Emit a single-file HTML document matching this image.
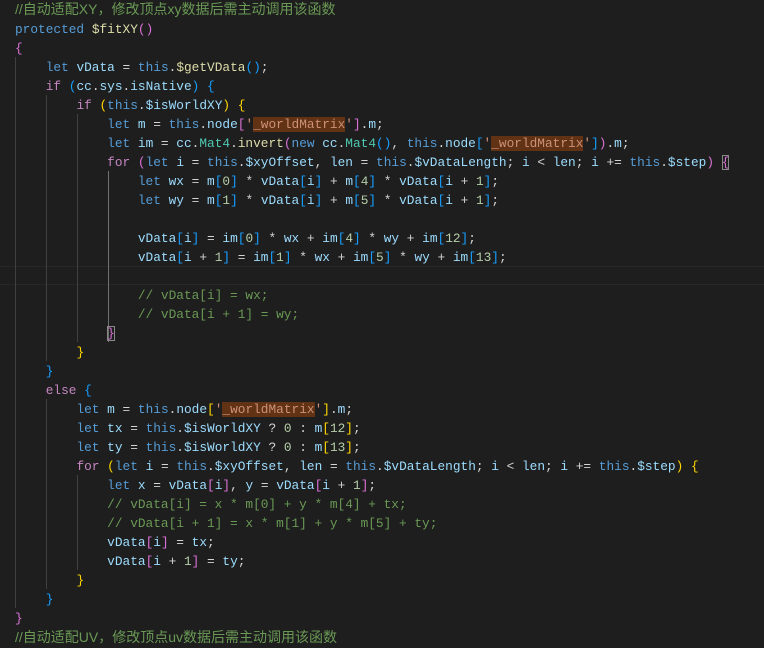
<!DOCTYPE html>
<html><head><meta charset="utf-8"><style>
html,body{margin:0;padding:0;background:#1e1e1e;width:764px;height:630px;overflow:hidden}
pre{margin:0;position:absolute;left:15px;top:0;font-family:"Liberation Mono",monospace;font-size:12.8px;line-height:19px;color:#d4d4d4;white-space:pre}
.k{color:#569cd6}.c{color:#c586c0}.v{color:#9cdcfe}.f{color:#dcdcaa}.cm{color:#6a9955}.n{color:#b5cea8}.s{color:#ce9178}.t{color:#4ec9b0}
.g{color:#ffd700}.o{color:#da70d6}.b{color:#179fff}
.h{background:#613214}
.cj{font-family:"Liberation Sans","Noto Sans CJK SC",sans-serif;font-size:14px}
.box{outline:1px solid #888;outline-offset:-1px}
.guide{position:absolute;width:1px;background:#404040}
.hl{position:absolute;left:0;width:764px;top:266px;height:17px;border-top:1px solid #282828;border-bottom:1px solid #282828}
</style></head><body>
<div class="hl"></div>
<div class="guide" style="left:15px;top:57px;height:551px"></div>
<div class="guide" style="left:46px;top:95px;height:266px"></div>
<div class="guide" style="left:77px;top:114px;height:228px"></div>
<div class="guide" style="left:108px;top:171px;height:171px;background:#707070"></div>
<div class="guide" style="left:46px;top:399px;height:190px"></div>
<div class="guide" style="left:77px;top:475px;height:95px"></div>
<pre><span class="cm cj">//自动适配XY，修改顶点xy数据后需主动调用该函数</span>
<span class="k">protected</span> <span class="f">$fitXY</span><span class="o">()</span>
<span class="o">{</span>
    <span class="k">let</span> <span class="v">vData</span> = <span class="k">this</span>.<span class="f">$getVData</span><span class="b">()</span>;
    <span class="c">if</span> <span class="b">(</span><span class="v">cc</span>.<span class="v">sys</span>.<span class="v">isNative</span><span class="b">)</span> <span class="b">{</span>
        <span class="c">if</span> <span class="g">(</span><span class="k">this</span>.<span class="v">$isWorldXY</span><span class="g">)</span> <span class="g">{</span>
            <span class="k">let</span> <span class="v">m</span> = <span class="k">this</span>.<span class="v">node</span><span class="o">[</span><span class="s">'<span class="h">_worldMatrix</span>'</span><span class="o">]</span>.<span class="v">m</span>;
            <span class="k">let</span> <span class="v">im</span> = <span class="v">cc</span>.<span class="t">Mat4</span>.<span class="f">invert</span><span class="o">(</span><span class="k">new</span> <span class="v">cc</span>.<span class="t">Mat4</span><span class="b">()</span>, <span class="k">this</span>.<span class="v">node</span><span class="b">[</span><span class="s">'<span class="h">_worldMatrix</span>'</span><span class="b">]</span><span class="o">)</span>.<span class="v">m</span>;
            <span class="c">for</span> <span class="o">(</span><span class="k">let</span> <span class="v">i</span> = <span class="k">this</span>.<span class="v">$xyOffset</span>, <span class="v">len</span> = <span class="k">this</span>.<span class="v">$vDataLength</span>; <span class="v">i</span> &lt; <span class="v">len</span>; <span class="v">i</span> += <span class="k">this</span>.<span class="v">$step</span><span class="o">)</span> <span class="o box">{</span>
                <span class="k">let</span> <span class="v">wx</span> = <span class="v">m</span><span class="b">[</span><span class="n">0</span><span class="b">]</span> * <span class="v">vData</span><span class="b">[</span><span class="v">i</span><span class="b">]</span> + <span class="v">m</span><span class="b">[</span><span class="n">4</span><span class="b">]</span> * <span class="v">vData</span><span class="b">[</span><span class="v">i</span> + <span class="n">1</span><span class="b">]</span>;
                <span class="k">let</span> <span class="v">wy</span> = <span class="v">m</span><span class="b">[</span><span class="n">1</span><span class="b">]</span> * <span class="v">vData</span><span class="b">[</span><span class="v">i</span><span class="b">]</span> + <span class="v">m</span><span class="b">[</span><span class="n">5</span><span class="b">]</span> * <span class="v">vData</span><span class="b">[</span><span class="v">i</span> + <span class="n">1</span><span class="b">]</span>;

                <span class="v">vData</span><span class="b">[</span><span class="v">i</span><span class="b">]</span> = <span class="v">im</span><span class="b">[</span><span class="n">0</span><span class="b">]</span> * <span class="v">wx</span> + <span class="v">im</span><span class="b">[</span><span class="n">4</span><span class="b">]</span> * <span class="v">wy</span> + <span class="v">im</span><span class="b">[</span><span class="n">12</span><span class="b">]</span>;
                <span class="v">vData</span><span class="b">[</span><span class="v">i</span> + <span class="n">1</span><span class="b">]</span> = <span class="v">im</span><span class="b">[</span><span class="n">1</span><span class="b">]</span> * <span class="v">wx</span> + <span class="v">im</span><span class="b">[</span><span class="n">5</span><span class="b">]</span> * <span class="v">wy</span> + <span class="v">im</span><span class="b">[</span><span class="n">13</span><span class="b">]</span>;

                <span class="cm">// vData[i] = wx;</span>
                <span class="cm">// vData[i + 1] = wy;</span>
            <span class="o box">}</span>
        <span class="g">}</span>
    <span class="b">}</span>
    <span class="c">else</span> <span class="b">{</span>
        <span class="k">let</span> <span class="v">m</span> = <span class="k">this</span>.<span class="v">node</span><span class="g">[</span><span class="s">'<span class="h">_worldMatrix</span>'</span><span class="g">]</span>.<span class="v">m</span>;
        <span class="k">let</span> <span class="v">tx</span> = <span class="k">this</span>.<span class="v">$isWorldXY</span> ? <span class="n">0</span> : <span class="v">m</span><span class="g">[</span><span class="n">12</span><span class="g">]</span>;
        <span class="k">let</span> <span class="v">ty</span> = <span class="k">this</span>.<span class="v">$isWorldXY</span> ? <span class="n">0</span> : <span class="v">m</span><span class="g">[</span><span class="n">13</span><span class="g">]</span>;
        <span class="c">for</span> <span class="g">(</span><span class="k">let</span> <span class="v">i</span> = <span class="k">this</span>.<span class="v">$xyOffset</span>, <span class="v">len</span> = <span class="k">this</span>.<span class="v">$vDataLength</span>; <span class="v">i</span> &lt; <span class="v">len</span>; <span class="v">i</span> += <span class="k">this</span>.<span class="v">$step</span><span class="g">)</span> <span class="g">{</span>
            <span class="k">let</span> <span class="v">x</span> = <span class="v">vData</span><span class="o">[</span><span class="v">i</span><span class="o">]</span>, <span class="v">y</span> = <span class="v">vData</span><span class="o">[</span><span class="v">i</span> + <span class="n">1</span><span class="o">]</span>;
            <span class="cm">// vData[i] = x * m[0] + y * m[4] + tx;</span>
            <span class="cm">// vData[i + 1] = x * m[1] + y * m[5] + ty;</span>
            <span class="v">vData</span><span class="o">[</span><span class="v">i</span><span class="o">]</span> = <span class="v">tx</span>;
            <span class="v">vData</span><span class="o">[</span><span class="v">i</span> + <span class="n">1</span><span class="o">]</span> = <span class="v">ty</span>;
        <span class="g">}</span>
    <span class="b">}</span>
<span class="o">}</span>
<span class="cm cj">//自动适配UV，修改顶点uv数据后需主动调用该函数</span></pre>
</body></html>
